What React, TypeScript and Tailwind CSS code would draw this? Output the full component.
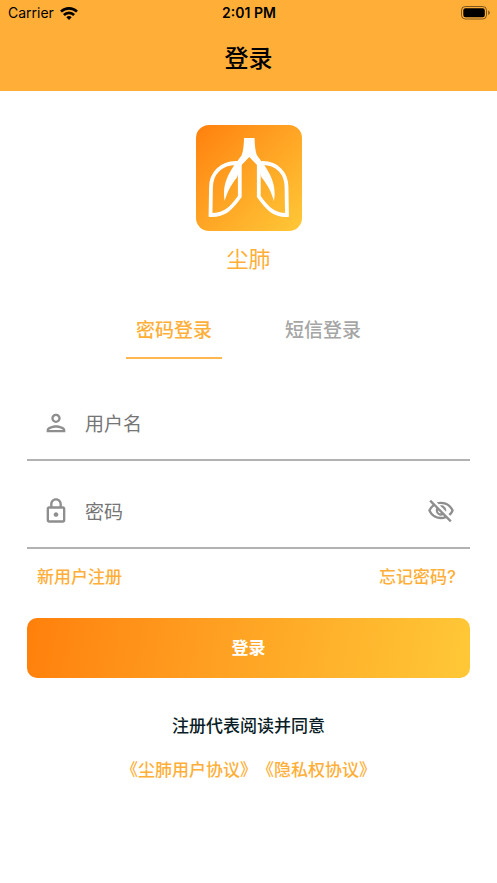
import React, { useState } from "react";
import {
  MdOutlineLock,
  MdOutlinePerson,
  MdOutlineVisibility,
  MdOutlineVisibilityOff,
} from "react-icons/md";

const WifiIcon = () => (
  <svg width="18" height="13" viewBox="0 0 18 13" fill="none" stroke="#000" strokeWidth="2.6">
    <path d="M1 4.7a11.3 11.3 0 0 1 16 0" />
    <path d="M3.9 8a7.2 7.2 0 0 1 10.2 0" />
    <path d="M9 13 6.3 10.2a3.9 3.9 0 0 1 5.4 0z" fill="#000" stroke="none" />
  </svg>
);

const BatteryIcon = () => (
  <svg width="29" height="14" viewBox="0 0 29 14" fill="none">
    <rect x="0.5" y="0.5" width="25" height="12.5" rx="3.8" stroke="#000" strokeOpacity="0.5" />
    <rect x="2.3" y="2.2" width="21.5" height="9" rx="2.2" fill="#000" />
    <path d="M27.3 4.6v4.4c.9-.4 1.4-1.2 1.4-2.2s-.5-1.8-1.4-2.2z" fill="#000" fillOpacity="0.6" />
  </svg>
);

const LungsLogo = () => (
  <svg
    className="rounded-[13px] bg-linear-135 from-[#ff800b] to-[#ffc837]"
    width="106"
    height="106"
    viewBox="0 0 106 106"
    fill="none"
  >
    <path
      d="M48 13H58.600C58.800 22 59.600 27 61.100 30.500L68.600 40.500C75.600 51 80.600 62 77.900 76C75.600 68 72.600 61 65.600 52.500L61.500 40.500L53.300 32L45.100 40.500L41 52.500C34 61 31 68 28.700 76C26 62 31 51 38 40.500L45.500 30.500C47 27 47.800 22 48 13z"
      fill="#fff"
    />
    <path
      d="M41 38C25 37.500 15 49 15 62L14.500 90C28 90.500 35 84 43.800 71.500V38"
      stroke="#fff"
      strokeWidth="3.800"
    />
    <path
      d="M65.600 38C81.600 37.500 90.500 49 90.500 62L91 90C78.600 90.500 71.600 84 62.800 71.500V38"
      stroke="#fff"
      strokeWidth="3.800"
    />
  </svg>
);

const tabs = [
  { key: "password", label: "密码登录" },
  { key: "sms", label: "短信登录" },
];

const App = () => {
  const [activeTab, setActiveTab] = useState("password");
  const [showPassword, setShowPassword] = useState(false);

  return (
    <div className="min-h-screen bg-white font-['Inter','Noto_Sans_CJK_SC',sans-serif]">
      <header className="bg-[#ffaf38] h-[91px] text-black">
        <div className="grid grid-cols-3 items-center h-[26px] pl-2 pr-[7px] text-sm">
          <div className="flex items-center gap-1.5">
            Carrier <WifiIcon />
          </div>
          <span className="text-center font-semibold">2:01 PM</span>
          <div className="flex justify-end">
            <BatteryIcon />
          </div>
        </div>
        <h1 className="text-center text-2xl font-medium leading-[66px]">登录</h1>
      </header>

      <main className="px-[27px] pt-[34px]">
        <div className="flex flex-col items-center">
          <LungsLogo />
          <p className="mt-3 text-[22px] leading-8 text-[#ffaf38]">尘肺</p>
        </div>

        <div role="tablist" className="mt-7 flex justify-center gap-[53px]">
          {tabs.map((tab) => (
            <button
              key={tab.key}
              type="button"
              role="tab"
              aria-selected={activeTab === tab.key}
              onClick={() => setActiveTab(tab.key)}
              className={`h-14 w-24 pt-0.5 border-b-2 text-[19px] font-medium ${
                activeTab === tab.key
                  ? "border-[#ffb84f] text-[#ffaf38]"
                  : "border-transparent text-[#a5a5a5]"
              }`}
            >
              {tab.label}
            </button>
          ))}
        </div>

        <form onSubmit={(e) => e.preventDefault()}>
          <div className="mt-7 flex h-[74px] items-center border-b-2 border-[#b2b2b2] px-[15px]">
            <label htmlFor="username" aria-label="用户名">
              <MdOutlinePerson size={28} color="#8e8e8e" />
            </label>
            <input
              id="username"
              type="text"
              placeholder="用户名"
              className="ml-[15px] h-8 min-w-0 flex-1 pt-0.5 text-[19px] text-[#333] outline-none placeholder:text-[#757575]"
            />
          </div>
          <div className="mt-[14px] flex h-[74px] items-center border-b-2 border-[#b2b2b2] px-[15px]">
            <label htmlFor="password" aria-label="密码">
              <MdOutlineLock size={28} color="#8e8e8e" />
            </label>
            <input
              id="password"
              type={showPassword ? "text" : "password"}
              placeholder="密码"
              className="ml-[15px] h-8 min-w-0 flex-1 pt-0.5 text-[19px] text-[#333] outline-none placeholder:text-[#757575]"
            />
            <button
              type="button"
              aria-label="显示密码"
              onClick={() => setShowPassword(!showPassword)}
            >
              {showPassword ? (
                <MdOutlineVisibility size={28} color="#8e8e8e" />
              ) : (
                <MdOutlineVisibilityOff size={28} color="#8e8e8e" />
              )}
            </button>
          </div>

          <div className="mt-4 flex justify-between pl-[10px] pr-[14px] text-[17px] leading-6 font-medium text-[#ffaf38]">
            <a href="#register">新用户注册</a>
            <a href="#forgot">忘记密码?</a>
          </div>

          <button
            type="submit"
            className="mt-[29px] h-[60px] w-full rounded-[10px] bg-linear-100 from-[#ff800b] to-[#ffc837] pt-0.5 text-[17px] font-bold text-white"
          >
            登录
          </button>
        </form>

        <div className="mt-9 text-center text-[17px] leading-6 font-medium">
          <p className="text-[#0b1d26]">注册代表阅读并同意</p>
          <p className="mt-5 whitespace-nowrap text-[#ffaf38] [text-spacing-trim:space-all]">
            <a href="#terms">《尘肺用户协议》</a>
            <a href="#privacy">《隐私权协议》</a>
          </p>
        </div>
      </main>
    </div>
  );
};

export default App;
